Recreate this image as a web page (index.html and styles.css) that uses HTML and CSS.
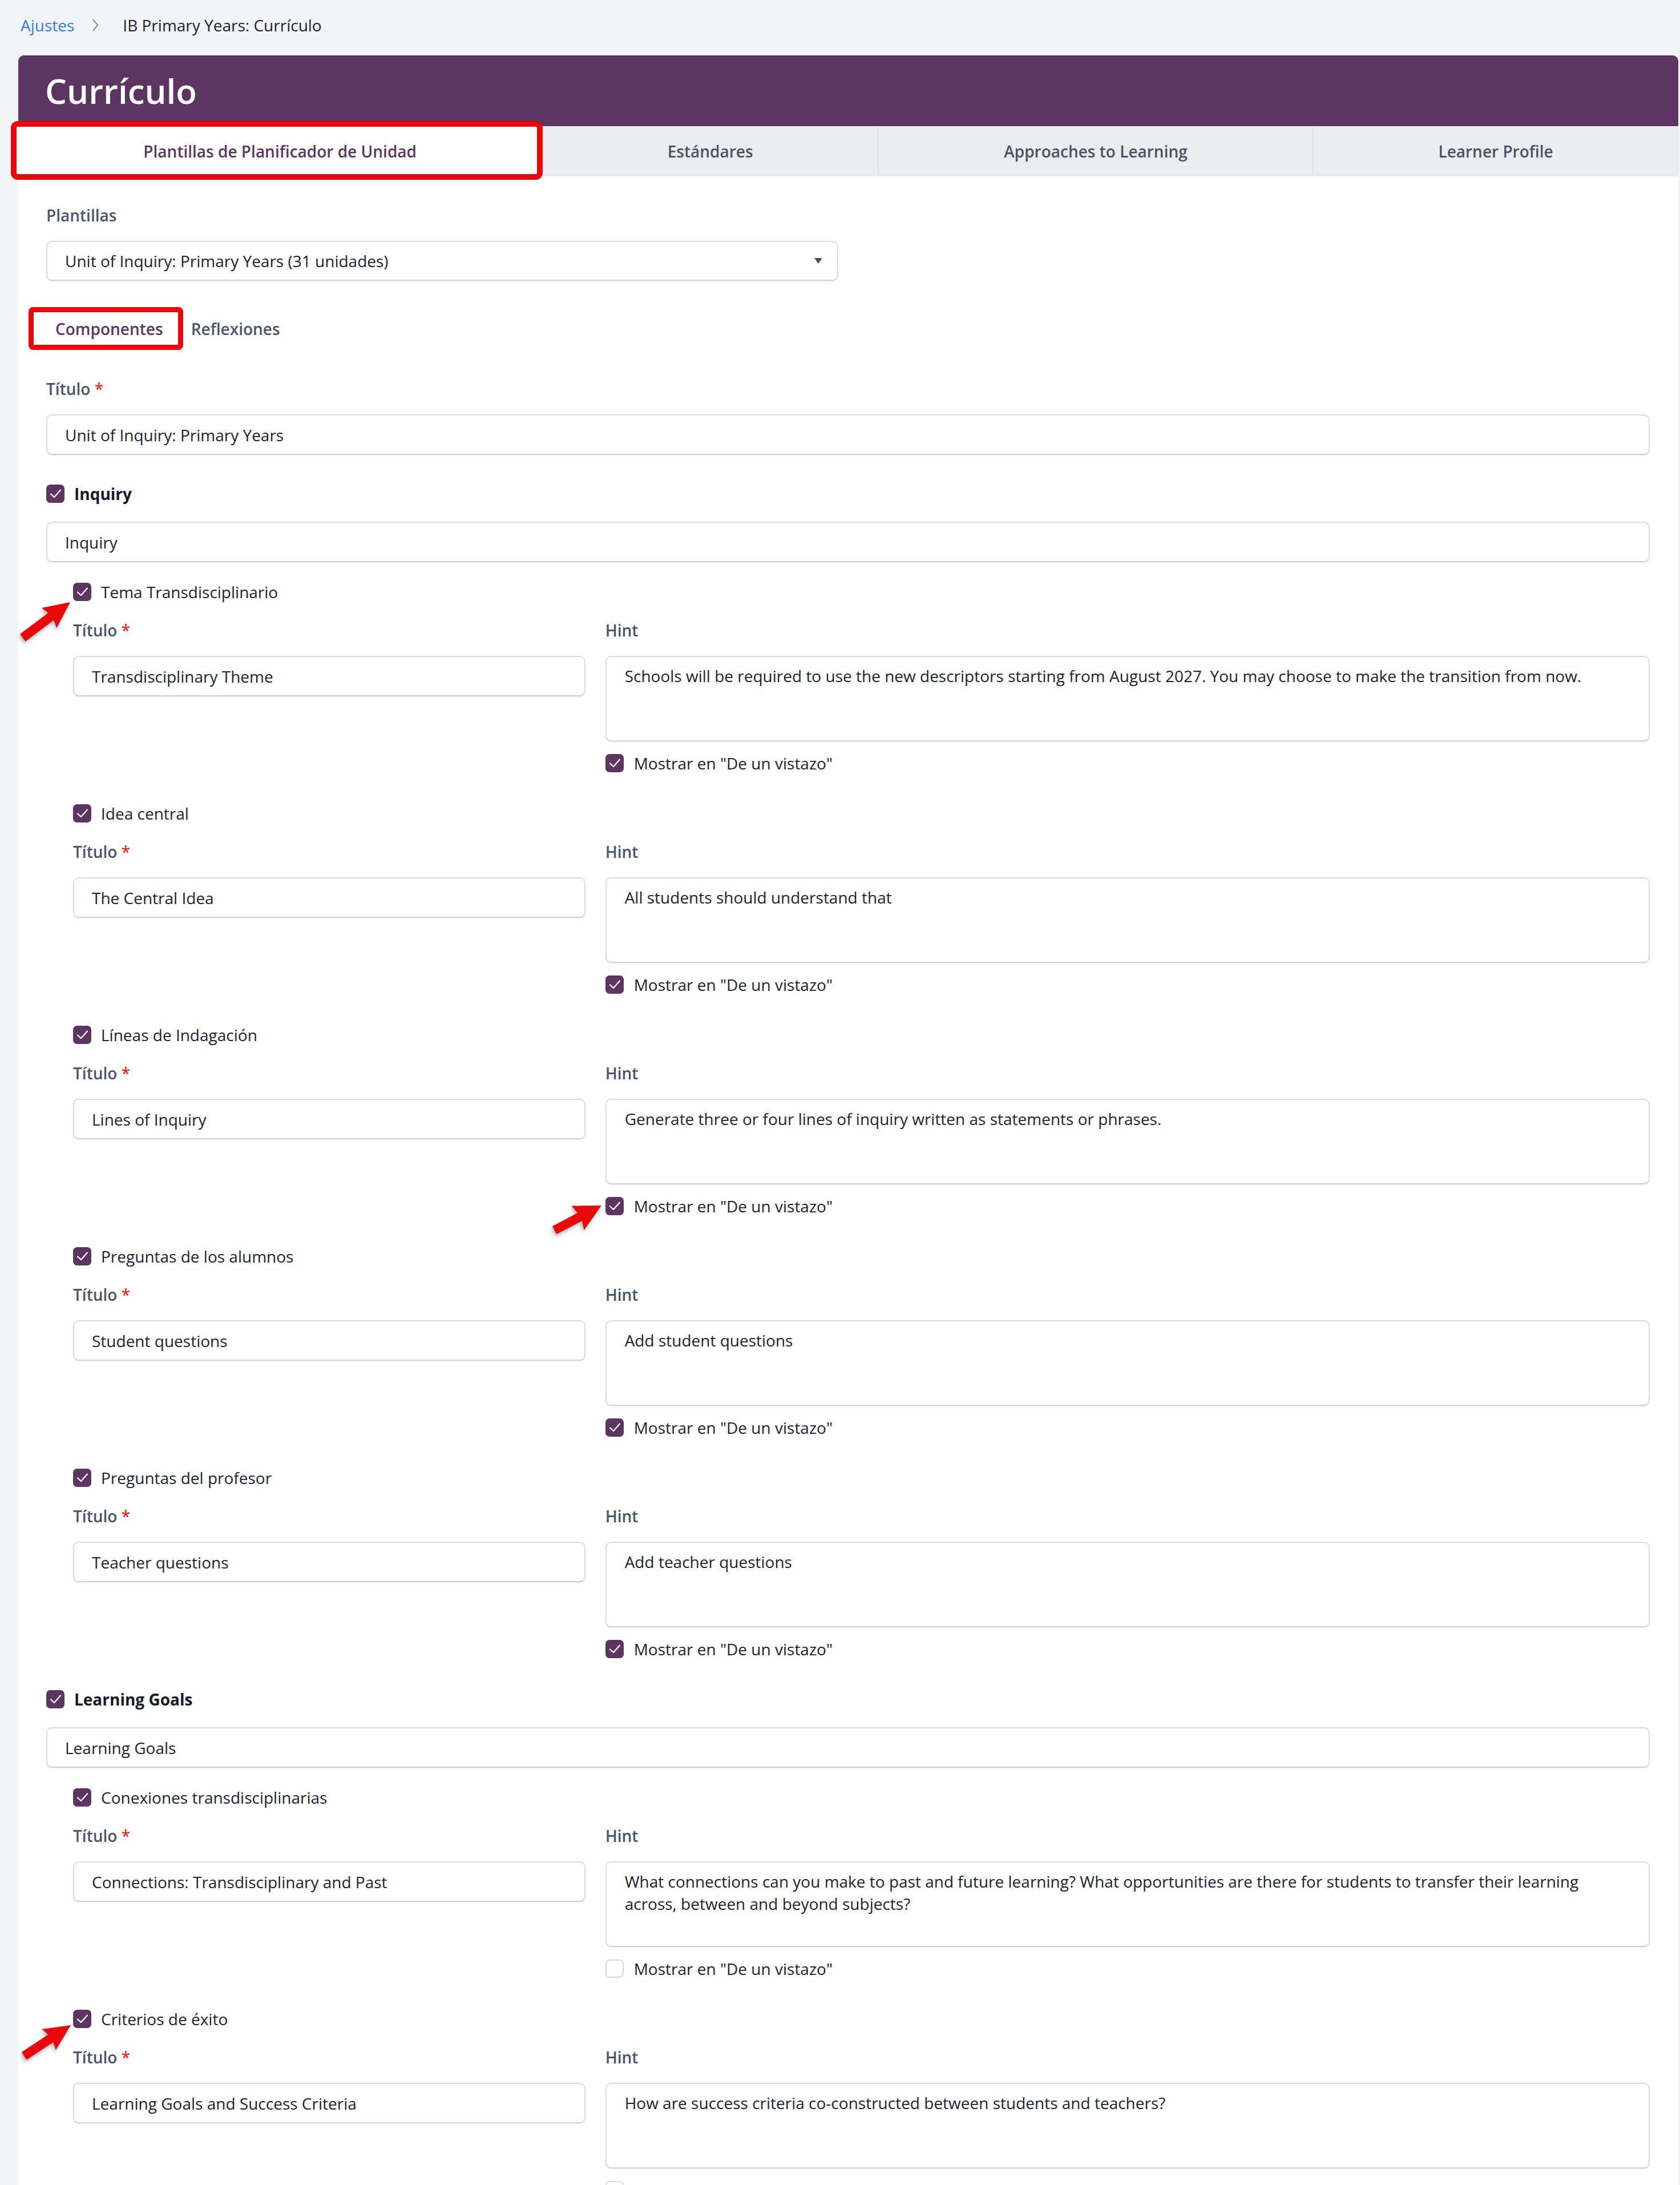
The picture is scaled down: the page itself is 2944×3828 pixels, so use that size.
FILE: index.html
```html
<!DOCTYPE html>
<html lang="es">
<head>
<meta charset="utf-8">
<title>Currículo</title>
<link rel="stylesheet" href="styles.css">
</head>
<body>
<nav class="breadcrumb">
  <a class="crumb-link" href="#">Ajustes</a>
  <svg class="crumb-sep" viewBox="0 0 14 24"><polyline points="3,2 11,12 3,22"/></svg>
  <span class="crumb-current">IB Primary Years: Currículo</span>
</nav>

<main class="card">
  <header class="card-header"><h1>Currículo</h1></header>
  <div class="tabs">
    <div class="tab active">Plantillas de Planificador de Unidad<span class="mark mark-tab"></span></div>
    <div class="tab">Estándares</div>
    <div class="tab">Approaches to Learning</div>
    <div class="tab">Learner Profile</div>
  </div>

  <div class="content">
    <div class="label">Plantillas</div>
    <div class="select"><span>Unit of Inquiry: Primary Years (31 unidades)</span><span class="caret"></span></div>

    <div class="subtabs">
      <div class="subtab active">Componentes<span class="mark mark-sub"></span></div>
      <div class="subtab">Reflexiones</div>
    </div>

    <div class="label main-label">Título <span class="req">*</span></div>
    <div class="input main-input">Unit of Inquiry: Primary Years</div>

    <section class="group">
      <div class="check-row"><span class="cb"><svg viewBox="0 0 32 32"><polyline points="8,16.5 14,22 25,9.5"/></svg></span><span class="group-title">Inquiry</span></div>
      <div class="input group-input">Inquiry</div>

      <div class="item">
        <div class="check-row"><span class="cb"><svg viewBox="0 0 32 32"><polyline points="8,16.5 14,22 25,9.5"/></svg></span><span>Tema Transdisciplinario</span>
          <svg class="arrow arrow-1"><polygon points="0,0 -46,22 -42,8 -104,8 -104,-8 -42,-8 -46,-22" transform="rotate(-36.8)"/></svg>
        </div>
        <div class="item-grid">
          <div class="col">
            <div class="label">Título <span class="req">*</span></div>
            <div class="input">Transdisciplinary Theme</div>
          </div>
          <div class="col">
            <div class="label">Hint</div>
            <div class="textarea">Schools will be required to use the new descriptors starting from August 2027. You may choose to make the transition from now.</div>
            <div class="check-row show-row"><span class="cb"><svg viewBox="0 0 32 32"><polyline points="8,16.5 14,22 25,9.5"/></svg></span><span>Mostrar en "De un vistazo"</span></div>
          </div>
        </div>
      </div>

      <div class="item">
        <div class="check-row"><span class="cb"><svg viewBox="0 0 32 32"><polyline points="8,16.5 14,22 25,9.5"/></svg></span><span>Idea central</span></div>
        <div class="item-grid">
          <div class="col">
            <div class="label">Título <span class="req">*</span></div>
            <div class="input">The Central Idea</div>
          </div>
          <div class="col">
            <div class="label">Hint</div>
            <div class="textarea">All students should understand that</div>
            <div class="check-row show-row"><span class="cb"><svg viewBox="0 0 32 32"><polyline points="8,16.5 14,22 25,9.5"/></svg></span><span>Mostrar en "De un vistazo"</span></div>
          </div>
        </div>
      </div>

      <div class="item">
        <div class="check-row"><span class="cb"><svg viewBox="0 0 32 32"><polyline points="8,16.5 14,22 25,9.5"/></svg></span><span>Líneas de Indagación</span></div>
        <div class="item-grid">
          <div class="col">
            <div class="label">Título <span class="req">*</span></div>
            <div class="input">Lines of Inquiry</div>
          </div>
          <div class="col">
            <div class="label">Hint</div>
            <div class="textarea">Generate three or four lines of inquiry written as statements or phrases.</div>
            <div class="check-row show-row"><span class="cb"><svg viewBox="0 0 32 32"><polyline points="8,16.5 14,22 25,9.5"/></svg></span><span>Mostrar en "De un vistazo"</span>
              <svg class="arrow arrow-2"><polygon points="0,0 -47,24 -43,8 -93,8 -93,-8 -43,-8 -47,-24" transform="rotate(-27.7)"/></svg>
            </div>
          </div>
        </div>
      </div>

      <div class="item">
        <div class="check-row"><span class="cb"><svg viewBox="0 0 32 32"><polyline points="8,16.5 14,22 25,9.5"/></svg></span><span>Preguntas de los alumnos</span></div>
        <div class="item-grid">
          <div class="col">
            <div class="label">Título <span class="req">*</span></div>
            <div class="input">Student questions</div>
          </div>
          <div class="col">
            <div class="label">Hint</div>
            <div class="textarea">Add student questions</div>
            <div class="check-row show-row"><span class="cb"><svg viewBox="0 0 32 32"><polyline points="8,16.5 14,22 25,9.5"/></svg></span><span>Mostrar en "De un vistazo"</span></div>
          </div>
        </div>
      </div>

      <div class="item">
        <div class="check-row"><span class="cb"><svg viewBox="0 0 32 32"><polyline points="8,16.5 14,22 25,9.5"/></svg></span><span>Preguntas del profesor</span></div>
        <div class="item-grid">
          <div class="col">
            <div class="label">Título <span class="req">*</span></div>
            <div class="input">Teacher questions</div>
          </div>
          <div class="col">
            <div class="label">Hint</div>
            <div class="textarea">Add teacher questions</div>
            <div class="check-row show-row"><span class="cb"><svg viewBox="0 0 32 32"><polyline points="8,16.5 14,22 25,9.5"/></svg></span><span>Mostrar en "De un vistazo"</span></div>
          </div>
        </div>
      </div>
    </section>

    <section class="group">
      <div class="check-row"><span class="cb"><svg viewBox="0 0 32 32"><polyline points="8,16.5 14,22 25,9.5"/></svg></span><span class="group-title">Learning Goals</span></div>
      <div class="input group-input">Learning Goals</div>

      <div class="item">
        <div class="check-row"><span class="cb"><svg viewBox="0 0 32 32"><polyline points="8,16.5 14,22 25,9.5"/></svg></span><span>Conexiones transdisciplinarias</span></div>
        <div class="item-grid">
          <div class="col">
            <div class="label">Título <span class="req">*</span></div>
            <div class="input">Connections: Transdisciplinary and Past</div>
          </div>
          <div class="col">
            <div class="label">Hint</div>
            <div class="textarea">What connections can you make to past and future learning? What opportunities are there for students to transfer their learning across, between and beyond subjects?</div>
            <div class="check-row show-row"><span class="cb off"></span><span>Mostrar en "De un vistazo"</span></div>
          </div>
        </div>
      </div>

      <div class="item">
        <div class="check-row"><span class="cb"><svg viewBox="0 0 32 32"><polyline points="8,16.5 14,22 25,9.5"/></svg></span><span>Criterios de éxito</span>
          <svg class="arrow arrow-3"><polygon points="0,0 -46,22 -42,8 -98,8 -98,-8 -42,-8 -46,-22" transform="rotate(-33.4)"/></svg>
        </div>
        <div class="item-grid">
          <div class="col">
            <div class="label">Título <span class="req">*</span></div>
            <div class="input">Learning Goals and Success Criteria</div>
          </div>
          <div class="col">
            <div class="label">Hint</div>
            <div class="textarea">How are success criteria co-constructed between students and teachers?</div>
            <div class="check-row show-row"><span class="cb off"></span><span>Mostrar en "De un vistazo"</span></div>
          </div>
        </div>
      </div>
    </section>
  </div>
</main>
</body>
</html>
```

FILE: styles.css
```css
* { box-sizing: border-box; }

html, body { margin: 0; padding: 0; }

body {
  background: #f3f4f8;
  font-family: "Open Sans", "Noto Sans", "Liberation Sans", sans-serif;
  font-size: 28px;
  line-height: 38px;
  color: #1d2331;
}

/* breadcrumb */
.breadcrumb {
  display: flex;
  align-items: center;
  height: 38px;
  margin: 25px 0 34px 36px;
}
.crumb-link { color: #2f7cf6; text-decoration: none; }
.crumb-sep { width: 14px; height: 24px; margin: 0 41px 0 30px; }
.crumb-sep polyline { fill: none; stroke: #6b7280; stroke-width: 1.6; }
.crumb-current { color: #1d2331; }

/* card */
.card {
  margin: 0 3px 0 32px;
  background: #fff;
  border-radius: 10px 10px 0 0;
}
.card-header {
  background: #5c3560;
  border-radius: 10px 10px 0 0;
  height: 124px;
  padding: 21px 47px;
}
.card-header h1 {
  margin: 0;
  font-size: 60px;
  line-height: 82px;
  font-weight: 600;
  color: #fff;
}

/* tabs */
.tabs {
  display: flex;
  height: 88px;
  background: #eaecf0;
}
.tab {
  flex: 1 1 auto;
  display: flex;
  align-items: center;
  justify-content: center;
  font-weight: 600;
  color: #4a5263;
  border-left: 1px solid #d6d9df;
  position: relative;
  white-space: nowrap;
}
.tab.active {
  background: #fff;
  color: #5c3560;
  border-left: 0;
}

/* red annotation boxes */
.mark {
  position: absolute;
  border: 10px solid #e8080b;
  border-radius: 12px;
  pointer-events: none;
  z-index: 2;
}
.mark-tab { left: -13px; right: -2px; top: -9px; bottom: -6px; }
.mark-sub { left: -31px; right: -19px; top: -11px; bottom: -10px; border-width: 9px; border-radius: 8px; }

/* content */
.content { padding: 49px 50px 40px 49px; }

.label { font-weight: 600; color: #4a5568; }
.req { color: #e02d2d; }

.select,
.input,
.textarea {
  background: #fff;
  border: 2px solid #d8dbe3;
  border-bottom-color: #cfd2db;
  border-radius: 10px;
  box-shadow: 0 1px 2px rgba(30, 40, 60, 0.10);
  color: #1d2331;
}

.select {
  width: calc((100% + 35px) / 2 - 35px);
  height: 70px;
  margin-top: 26px;
  display: flex;
  align-items: center;
  justify-content: space-between;
  padding: 0 26px 0 31px;
}
.caret {
  width: 0;
  height: 0;
  border-left: 7px solid transparent;
  border-right: 7px solid transparent;
  border-top: 10px solid #4a5263;
}

.subtabs {
  display: flex;
  gap: 17px;
  margin-top: 57px;
}
.subtab {
  position: relative;
  padding: 8px 16px;
  font-weight: 600;
  color: #4a5568;
}
.subtab.active { color: #5c3560; }

.main-label { margin-top: 59px; }

.input {
  height: 71px;
  margin-top: 26px;
  display: flex;
  align-items: center;
  padding: 0 31px;
  white-space: nowrap;
}
.main-input { margin-bottom: 49px; }

.textarea {
  height: 150px;
  margin-top: 26px;
  padding: 14px 32px;
  line-height: 39px;
}

/* checkboxes */
.check-row {
  position: relative;
  display: flex;
  align-items: center;
  gap: 17px;
  height: 38px;
}
.cb {
  flex: none;
  width: 32px;
  height: 32px;
  border-radius: 7px;
  background: #5c3560;
}
.cb svg { display: block; width: 32px; height: 32px; }
.cb polyline { fill: none; stroke: #fff; stroke-width: 2.2; stroke-linecap: round; stroke-linejoin: round; }
.cb.off { background: #fff; border: 2px solid #d5d8e0; }

.group-title { font-weight: 700; color: #151b28; }
.group-input { margin-top: 30px; margin-bottom: 33px; }

.show-row { margin-top: 19px; gap: 18px; }

/* sub items */
.item { margin: 0 0 50px 47px; }
.item-grid {
  display: grid;
  grid-template-columns: calc((100% + 35px) / 3 - 35px) 1fr;
  column-gap: 35px;
  margin-top: 29px;
}
.col { min-width: 0; }

/* red annotation arrows */
.arrow {
  position: absolute;
  width: 1px;
  height: 1px;
  overflow: visible;
  filter: drop-shadow(-2px 4px 3px rgba(0, 0, 0, 0.3));
  z-index: 2;
}
.arrow polygon { fill: #e8080b; }
.arrow-1 { left: -5px; top: 37px; }
.arrow-2 { left: -7px; top: 18px; }
.arrow-3 { left: -4px; top: 30px; }
```
